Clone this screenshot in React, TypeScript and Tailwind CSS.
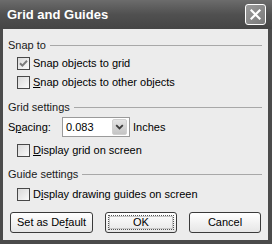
import type { ReactNode } from "react";

const font = { fontFamily: '"Liberation Sans", Arial, sans-serif' };

function SectionHeader({ children, className }: { children: ReactNode; className?: string }) {
  return (
    <div className={`flex h-[14px] items-center gap-[4px] pl-[5px] pr-[6px] text-[11px] text-[#1a1a1a] ${className ?? ""}`}>
      <span className="shrink-0 leading-none">{children}</span>
      <div className="h-px flex-1 bg-[#a8a8a8]" />
    </div>
  );
}

function Checkbox({ checked = false, children, className }: { checked?: boolean; children: ReactNode; className?: string }) {
  return (
    <label className={`flex h-[15px] items-center gap-[3px] pl-[14px] text-[11px] text-black ${className ?? ""}`}>
      <span className="flex h-[13px] w-[13px] shrink-0 items-center justify-center border border-[#484848] bg-gradient-to-br from-[#dadada] to-[#fafafa]">
        {checked && (
          <svg width="9" height="9" viewBox="0 0 9 9" aria-hidden="true">
            <path d="M1 4.2 L3.4 6.6 L8 1.8" fill="none" stroke="#7a7a7a" strokeWidth="2" />
          </svg>
        )}
      </span>
      <span className="leading-none">{children}</span>
    </label>
  );
}

function Button({ children, focused = false, className }: { children: ReactNode; focused?: boolean; className?: string }) {
  return (
    <button
      className={`flex h-[21px] items-center justify-center rounded-[3px] border border-[#3a3a3a] bg-gradient-to-b from-[#ffffff] to-[#e6e6e6] p-[2px] text-[11px] text-black ${className ?? ""}`}
    >
      <span
        className={`flex h-full w-full items-center justify-center leading-none ${focused ? "border border-dotted border-[#555] shadow-[inset_0_0_0_1px_#c8c8c8]" : ""}`}
      >
        {children}
      </span>
    </button>
  );
}

export default function App() {
  return (
    <div className="flex h-[244px] w-[272px] flex-col bg-[#4b4b4b]" style={font}>
      {/* title bar */}
      <div className="flex h-[29px] shrink-0 items-center justify-between bg-gradient-to-b from-[#6c6c6c] via-[#505050] to-[#454545] pl-[7px] pr-[6px]">
        <span className="text-[13px] font-bold leading-none text-white">Grid and Guides</span>
        <div className="flex h-[21px] w-[21px] items-center justify-center rounded-[3px] border border-white bg-gradient-to-br from-[#9a9a9a] to-[#7a7a7a]">
          <svg width="11" height="11" viewBox="0 0 11 11" aria-hidden="true">
            <path d="M1.5 1.5 L9.5 9.5 M9.5 1.5 L1.5 9.5" stroke="white" strokeWidth="2.2" strokeLinecap="square" />
          </svg>
        </div>
      </div>

      {/* body */}
      <div className="mb-[4px] ml-[3px] mr-[4px] flex flex-1 flex-col bg-[#ececec]">
        <SectionHeader className="mt-[9px]">Snap to</SectionHeader>
        <Checkbox checked className="mt-[4px]">
          Snap objects to <span className="underline underline-offset-1">g</span>rid
        </Checkbox>
        <Checkbox className="mt-[4px]">
          <span className="underline underline-offset-1">S</span>nap objects to other objects
        </Checkbox>

        <SectionHeader className="mt-[10px]">Grid settings</SectionHeader>
        <div className="mt-[3px] flex h-[20px] items-center pl-[5px] text-[11px] text-black">
          <span className="w-[54px] leading-none">
            S<span className="underline underline-offset-1">p</span>acing:
          </span>
          <div className="flex h-[20px] w-[68px] items-center border border-[#9a9a9a] bg-white pl-[3px] pr-[2px]">
            <span className="flex-1 leading-none">0.083</span>
            <div className="flex h-[16px] w-[15px] items-center justify-center rounded-[2px] border border-[#d0d0d0] bg-gradient-to-b from-[#e4e4e4] to-[#c4c4c4]">
              <svg width="9" height="6" viewBox="0 0 9 6" aria-hidden="true">
                <path d="M1.2 1.2 L4.5 4.5 L7.8 1.2" fill="none" stroke="#3c3c3c" strokeWidth="1.8" />
              </svg>
            </div>
          </div>
          <span className="ml-[3px] leading-none">Inches</span>
        </div>
        <Checkbox className="mt-[6px]">
          <span className="underline underline-offset-1">D</span>isplay grid on screen
        </Checkbox>

        <SectionHeader className="mt-[9px]">Guide settings</SectionHeader>
        <Checkbox className="mt-[6px]">
          D<span className="underline underline-offset-1">i</span>splay drawing guides on screen
        </Checkbox>

        <div className="mt-[10px] flex gap-[12px] px-[7px]">
          <Button className="w-[83px]">
            Set as De<span className="underline underline-offset-1">f</span>ault
          </Button>
          <Button focused className="w-[72px]">OK</Button>
          <Button className="w-[72px]">Cancel</Button>
        </div>
      </div>
    </div>
  );
}
